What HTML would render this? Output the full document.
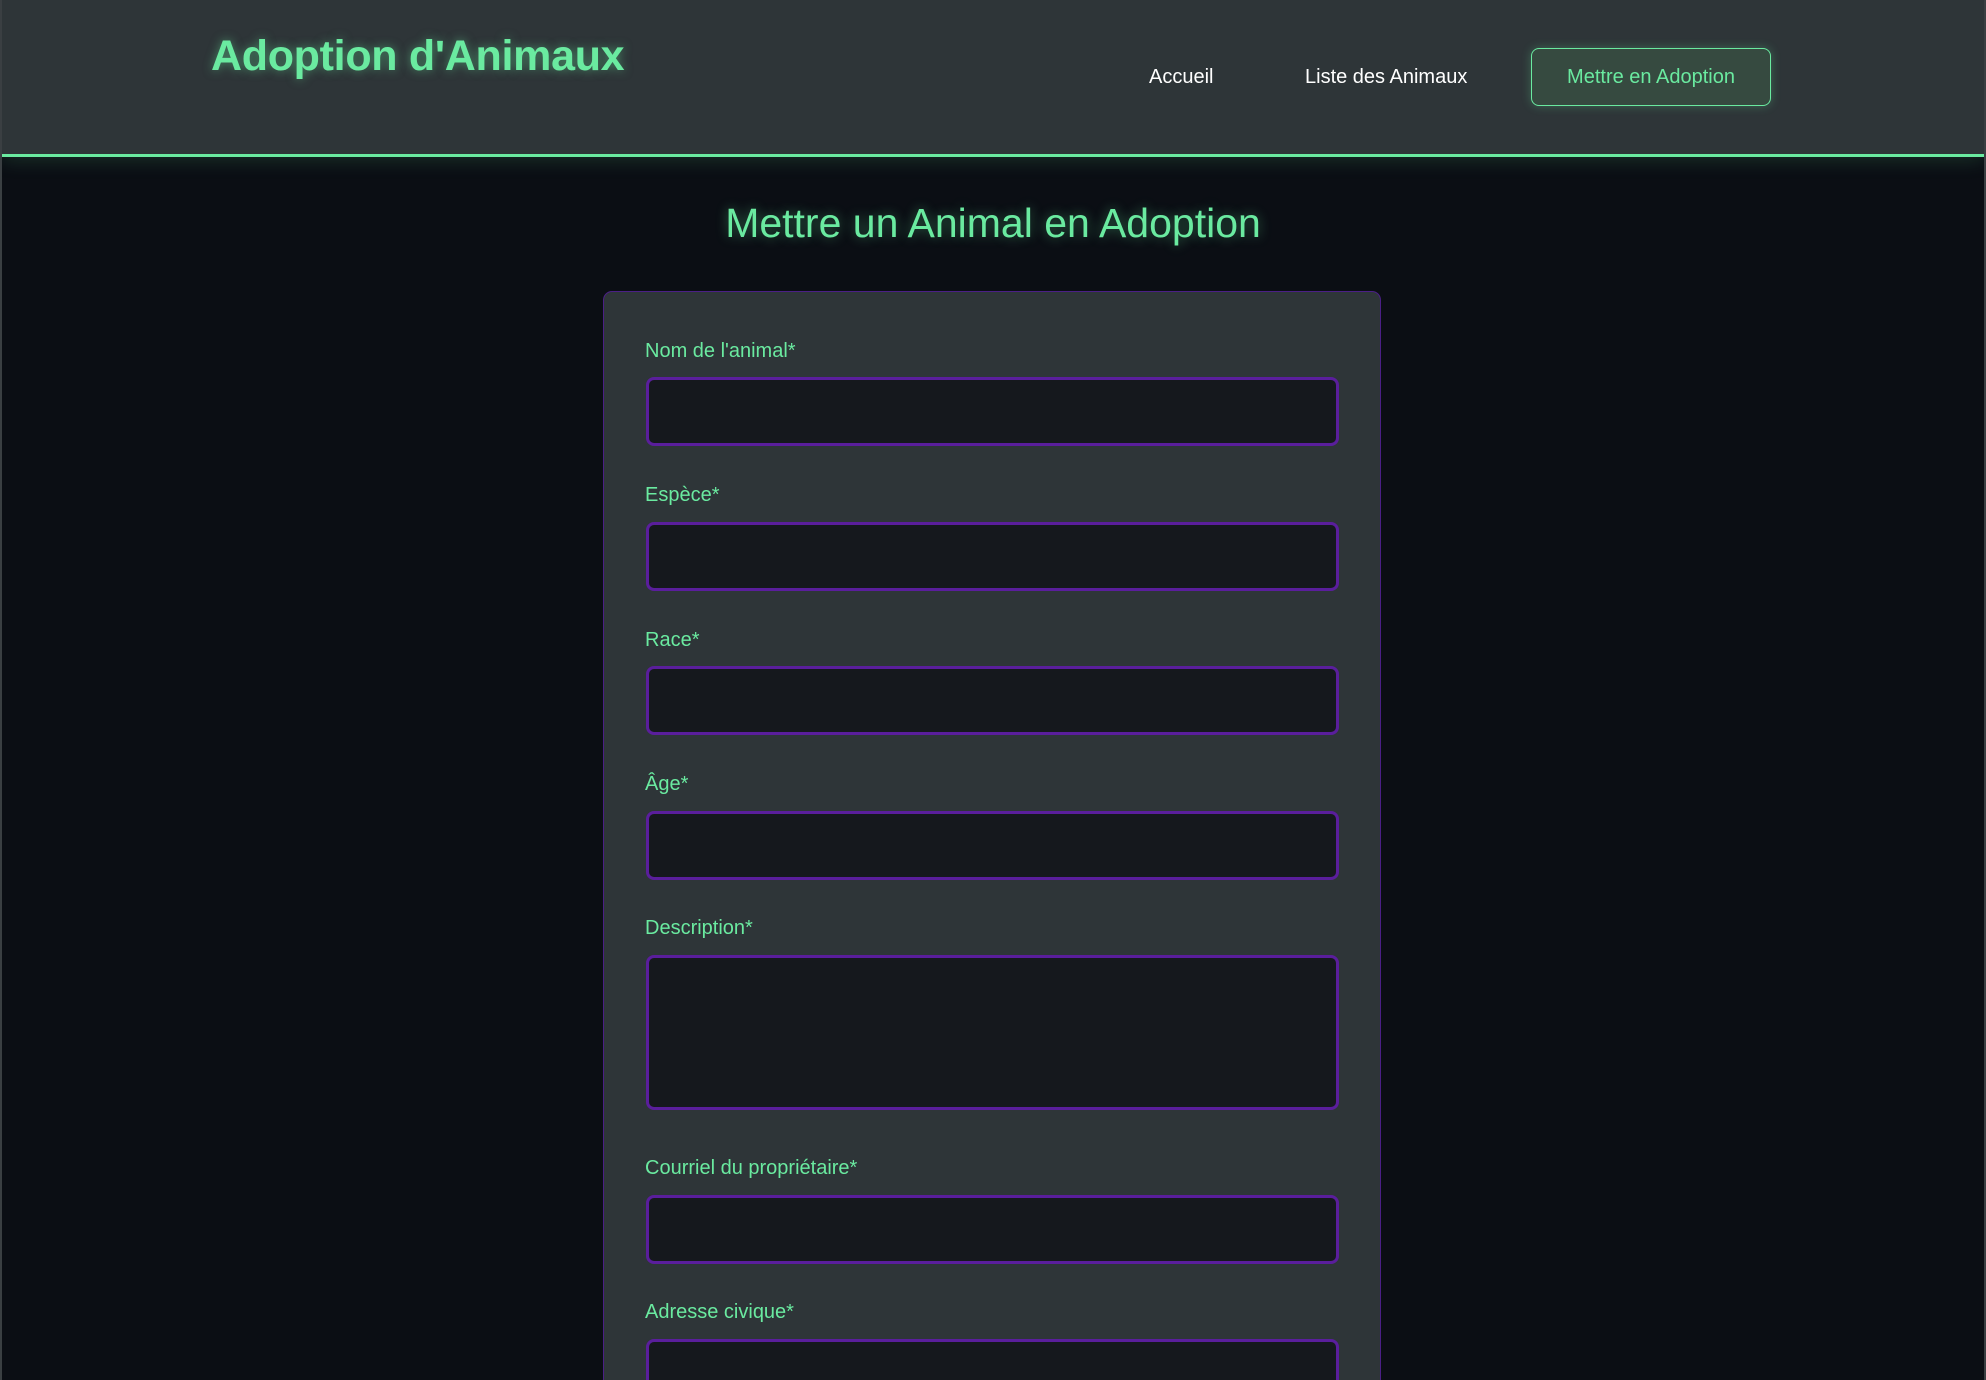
<!DOCTYPE html>
<html style="width:1986px;height:1380px;overflow:hidden"><head><meta charset="utf-8"><style>
*{box-sizing:border-box;margin:0;padding:0}
body{width:1986px;height:1380px;overflow:hidden;background:#0b0e14;font-family:"Liberation Sans","DejaVu Sans",sans-serif;position:relative}
.bl{position:absolute;top:0;bottom:0;width:2px;background:#3a3f42}
.hdr{position:absolute;left:2px;right:2px;top:0;height:157px;background:#2e3538;border-bottom:3px solid #6aeaa0;box-shadow:0 4px 18px rgba(100,227,154,.15)}
.logo{position:absolute;left:211px;top:32px;font-size:43px;font-weight:bold;color:#6aeaa0;text-shadow:0 0 10px rgba(100,227,154,.5);letter-spacing:-.3px}
.nav{position:absolute;top:66px;font-size:20px;color:#fff}
.btn{position:absolute;left:1531px;top:48px;width:240px;height:58px;border:1.5px solid #6aeaa0;border-radius:8px;background:#364a40;color:#6aeaa0;font-size:20px;text-align:center;line-height:56px;box-shadow:0 0 10px rgba(100,227,154,.3)}
h1{position:absolute;left:0;width:1986px;top:200px;text-align:center;font-size:41px;font-weight:normal;color:#6aeaa0;text-shadow:0 0 12px rgba(100,227,154,.45)}
.card{position:absolute;left:603px;top:291px;width:778px;height:1100px;background:#2e3538;border:1.5px solid #4b1f86;border-radius:9px}
.lbl{position:absolute;left:645px;font-size:20px;color:#6aeaa0}
.inp{position:absolute;left:646px;width:693px;height:69px;background:#15181d;border:3px solid #5a1e9c;border-radius:8px}
</style></head><body>
<div class="hdr"></div>
<div class="bl" style="left:0"></div><div class="bl" style="right:0"></div>
<div class="logo">Adoption d'Animaux</div>
<div class="nav" style="left:1149px">Accueil</div>
<div class="nav" style="left:1305px">Liste des Animaux</div>
<div class="btn">Mettre en Adoption</div>
<h1>Mettre un Animal en Adoption</h1>
<div class="card"></div>
<div class="lbl" style="top:340px">Nom de l'animal*</div>
<div class="inp" style="top:377px"></div>
<div class="lbl" style="top:484px">Espèce*</div>
<div class="inp" style="top:522px"></div>
<div class="lbl" style="top:629px">Race*</div>
<div class="inp" style="top:666px"></div>
<div class="lbl" style="top:773px">Âge*</div>
<div class="inp" style="top:811px"></div>
<div class="lbl" style="top:917px">Description*</div>
<div class="inp" style="top:955px;height:155px"></div>
<div class="lbl" style="top:1157px">Courriel du propriétaire*</div>
<div class="inp" style="top:1195px"></div>
<div class="lbl" style="top:1301px">Adresse civique*</div>
<div class="inp" style="top:1339px"></div>
</body></html>
